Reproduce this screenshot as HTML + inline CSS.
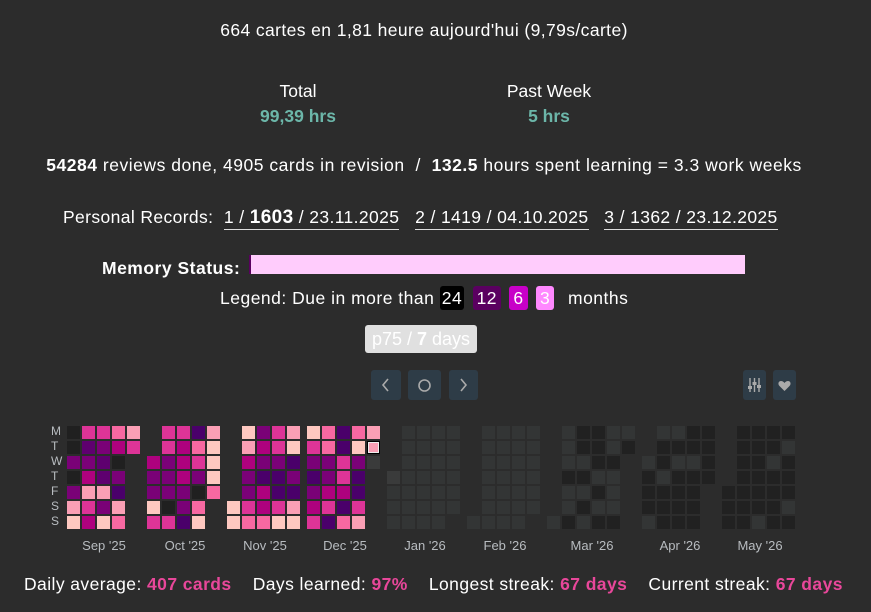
<!DOCTYPE html>
<html><head><meta charset="utf-8"><style>
body{margin:0;width:871px;height:612px;background:#2c2c2c;color:#fff;font-family:"Liberation Sans",sans-serif;position:relative;overflow:hidden}
.a{position:absolute;white-space:nowrap}
.c{transform:translateX(-50%)}
.teal{color:#6cb6a9;font-weight:bold}
.pk{color:#e8479a;font-weight:bold}
.rec{border-bottom:1px solid #ddd;padding-bottom:2px}
.lg{display:inline-block;padding:0 4px;border-radius:3px;line-height:24px;margin-right:3px}
.btn{position:absolute;top:370px;height:30px;background:#2e3c47;border-radius:3px}
.cell{position:absolute;width:13px;height:13px}
.ml{position:absolute;top:538px;font-size:13px;color:#b8bcc0;transform:translateX(-50%)}
.dl{position:absolute;left:51px;font-size:12px;color:#b8bcc0;line-height:13px}
</style></head><body>
<div class="a c" style="left:424px;top:20px;font-size:17.5px;letter-spacing:0.4px">664 cartes en 1,81 heure aujourd'hui (9,79s/carte)</div>
<div class="a c" style="left:298px;top:81px;font-size:17.5px;text-align:center">Total<br><span class="teal" style="line-height:28px">99,39 hrs</span></div>
<div class="a c" style="left:549px;top:81px;font-size:17.5px;text-align:center">Past Week<br><span class="teal" style="line-height:28px">5 hrs</span></div>
<div class="a c" style="left:424px;top:155px;font-size:17.5px;letter-spacing:0.52px"><b>54284</b> reviews done, 4905 cards in revision &nbsp;/ &nbsp;<b>132.5</b> hours spent learning = 3.3 work weeks</div>
<div class="a" style="left:63px;top:207px;font-size:17.5px;letter-spacing:0.38px">Personal Records:&nbsp; <span class="rec">1 / <b style="font-size:19px">1603</b> / 23.11.2025</span>&nbsp;&nbsp; <span class="rec">2 / 1419 / 04.10.2025</span>&nbsp;&nbsp; <span class="rec">3 / 1362 / 23.12.2025</span></div>
<div class="a" style="left:102px;top:258px;font-size:17.5px;font-weight:bold;letter-spacing:0.5px">Memory Status:</div>
<div class="a" style="left:249px;top:255px;width:2px;height:19px;background:#5a0060"></div>
<div class="a" style="left:251px;top:255px;width:494px;height:19px;background:#ffccfc"></div>
<div class="a" style="left:220px;top:286px;font-size:17.5px;line-height:24px;letter-spacing:0.5px">Legend: Due in more than <span class="lg" style="background:#000;padding:0 2px">24</span> <span class="lg" style="background:#5a0060">12</span> <span class="lg" style="background:#c800c8">6</span> <span class="lg" style="background:#ff88ff">3</span>&nbsp; months</div>
<div class="a" style="left:365px;top:325px;width:112px;height:28px;background:#e0e0e0;border-radius:3px;color:#fff;font-size:18px;line-height:28px;text-align:center">p75 / <b>7</b> days</div>
<div class="btn" style="left:371px;width:30px"><svg width="30" height="30"><path d="M17 9l-5 6 5 6" stroke="#aaa" stroke-width="1.6" fill="none"/></svg></div>
<div class="btn" style="left:408px;width:33px"><svg width="33" height="30"><circle cx="16.5" cy="15.5" r="5.5" stroke="#aaa" stroke-width="1.6" fill="none"/></svg></div>
<div class="btn" style="left:449px;width:29px"><svg width="29" height="30"><path d="M12 9l5 6-5 6" stroke="#aaa" stroke-width="1.6" fill="none"/></svg></div>
<div class="btn" style="left:743px;width:23px"><svg width="23" height="30"><g stroke="#aaa" stroke-width="1.4"><path d="M7 8v14M11.5 8v14M16 8v14"/></g><g fill="#aaa"><rect x="5" y="16" width="4" height="3"/><rect x="9.5" y="12" width="4" height="3"/><rect x="14" y="15" width="4" height="3"/></g></svg></div>
<div class="btn" style="left:773px;width:23px"><svg width="23" height="30"><path d="M11.5 21l-5-5c-2-2-1-5 1.5-5 1.5 0 2.8 1 3.5 2 .7-1 2-2 3.5-2 2.5 0 3.5 3 1.5 5z" fill="#aaa"/></svg></div>
<div class="dl" style="top:425px">M</div><div class="dl" style="top:440px">T</div><div class="dl" style="top:455px">W</div><div class="dl" style="top:470px">T</div><div class="dl" style="top:485px">F</div><div class="dl" style="top:500px">S</div><div class="dl" style="top:515px">S</div>
<div id="g"></div>
<div class="ml" style="left:104px">Sep '25</div><div class="ml" style="left:185px">Oct '25</div><div class="ml" style="left:265px">Nov '25</div><div class="ml" style="left:345px">Dec '25</div><div class="ml" style="left:425px">Jan '26</div><div class="ml" style="left:505px">Feb '26</div><div class="ml" style="left:592px">Mar '26</div><div class="ml" style="left:680px">Apr '26</div><div class="ml" style="left:760px">May '26</div>
<div class="a" style="left:24px;top:574px;font-size:17.5px;letter-spacing:0.42px">Daily average: <span class="pk">407 cards</span>&nbsp;&nbsp;&nbsp; Days learned: <span class="pk">97%</span>&nbsp;&nbsp;&nbsp; Longest streak: <span class="pk">67 days</span>&nbsp;&nbsp;&nbsp; Current streak: <span class="pk">67 days</span></div>
<script>
var C={k:'#202020',g:'#333535',G:'#3a3b3b',d:'#212121',a:'#fec8c0',b:'#fa9fb5',c:'#f768a1',m:'#dd3497',n:'#ae017e',o:'#7a0177',p:'#4a006a',q:'#5e006f'};
var M=[
[67,["kmmcb","kqonm","ooqk.","knqo.","obbp.","bmob.","anac."]],
[147,[".mmpb",".mnca","nonma","oonoa","oookc","akoc.","mmpa."]],
[227,[".aomb",".bnma",".noop",".oppo",".onpp","amnmb","accaa"]],
[307,["acpcb","mcpaB","oomoG","pomp.","onnp.","nmpm.","mpcb."]],
[387,[".gggg",".gggg",".gggg","Ggggg","ggggg","ggggg","gggg."]],
[467,[".gggg",".gggg",".gggg",".gggg",".gggg",".gggg","gggg."]],
[547,[".gddgg",".gddgd",".ggdd.",".ddgg.",".ggdg.",".gdgg.","gdgdd."]],
[642,[".ggdd",".dddd","gdggd","dgddd","dddd.","dddd.","gddd."]],
[722,[".dddd",".dddg",".ddgd",".dddd","ddddd","ddddg","ddgdd"]]];
var h='';M.forEach(function(m){m[1].forEach(function(r,ri){for(var i=0;i<r.length;i++){var ch=r[i];if(ch=='.')continue;var col,st='';if(ch=='B'){col=C.b;st='box-sizing:border-box;border:1px solid #000;outline:1px solid #eee;outline-offset:-2px;';}else col=C[ch];h+='<div class="cell" style="left:'+(m[0]+i*15)+'px;top:'+(426+ri*15)+'px;background:'+col+';'+st+'"></div>';}});});
document.getElementById('g').innerHTML=h;
</script>
</body></html>
